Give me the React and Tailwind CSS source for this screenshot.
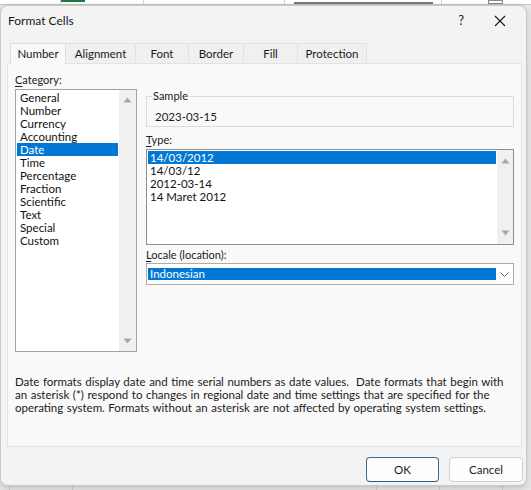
import React from 'react'

const font = { fontFamily: 'Lato, "Noto Sans", sans-serif' }

const categories = ['General', 'Number', 'Currency', 'Accounting', 'Date', 'Time', 'Percentage', 'Fraction', 'Scientific', 'Text', 'Special', 'Custom']
const types = ['14/03/2012', '14/03/12', '2012-03-14', '14 Maret 2012']
const tabs = [
  { label: 'Alignment', w: 'w-[70px]' },
  { label: 'Font', w: 'w-[53px]' },
  { label: 'Border', w: 'w-[55px]' },
  { label: 'Fill', w: 'w-[54px]' },
  { label: 'Protection', w: 'w-[69px]' },
]

function ArrowUp() {
  return (
    <svg width="9" height="6" viewBox="0 0 9 6"><path d="M0.5 5.5 L4.5 0.5 L8.5 5.5 Z" fill="#a6a6a6" /></svg>
  )
}

function ArrowDown() {
  return (
    <svg width="9" height="6" viewBox="0 0 9 6"><path d="M0.5 0.5 L4.5 5.5 L8.5 0.5 Z" fill="#a6a6a6" /></svg>
  )
}

function Scrollbar() {
  return (
    <div className="w-[17px] self-stretch bg-[#f0f0f0] flex flex-col items-center justify-between py-[7px]">
      <ArrowUp />
      <ArrowDown />
    </div>
  )
}

export default function App() {
  return (
    <div className="relative w-[531px] h-[490px] overflow-hidden bg-[#e9e9e9] text-[#1b1b1b]" style={font}>
      {/* spreadsheet behind the dialog */}
      <div className="h-[5px] bg-white border-b border-[#c6c6c6] flex">
        <div className="w-[61px] border-r border-[#d4d4d4]" />
        <div className="w-[24px] bg-[#217346] h-[2px]" />
        <div className="w-[59px] border-r border-[#d4d4d4]" />
        <div className="w-[141px] border-r border-[#d4d4d4]" />
        <div className="w-[9px]" />
        <div className="w-[139px] border-b-2 border-[#777]" />
        <div className="w-[9px] border-r border-[#d4d4d4]" />
        <div className="w-[46px]" />
        <div className="w-[15px] border border-[#888]" />
      </div>
      <div className="absolute left-0 bottom-0 w-full h-[5px] bg-[#e6e6e6] flex">
        <div className="w-[10px] border-r border-[#cfcfcf]" />
        <div className="w-[63px] border-r border-[#cfcfcf]" />
        <div className="w-[304px] border-r border-[#cfcfcf]" />
        <div className="w-[63px] border-r border-[#cfcfcf]" />
        <div className="w-[63px] border-r border-[#cfcfcf]" />
      </div>

      {/* dialog window */}
      <div className="absolute left-0 top-[5px] w-[527px] h-[481px] bg-[#f3f3f3] rounded-[8px] border border-[#c9c9c9] shadow-[0_2px_6px_rgba(0,0,0,0.18)] flex flex-col">
        {/* title bar */}
        <div className="h-[37px] flex items-center pl-[7px] pr-[20px]">
          <span className="text-[12px] leading-[14px] text-[#1a1a1a] -mt-[7px]">Format Cells</span>
          <span className="ml-auto text-[13px] text-[#222] -mt-[7px]">?</span>
          <svg className="ml-[30px] -mt-[7px]" width="12" height="12" viewBox="0 0 12 12">
            <path d="M1 1 L11 11 M11 1 L1 11" stroke="#1a1a1a" strokeWidth="1.1" />
          </svg>
        </div>

        {/* tabs */}
        <div className="flex pl-[9px] h-[20px] relative z-10">
          <div className="w-[56px] h-[21px] bg-[#f9f9f9] border-l border-t border-r border-[#dedede] flex items-center justify-center text-[11.5px] text-[#1b1b1b]">
            Number
          </div>
          {tabs.map((t) => (
            <div key={t.label} className={`${t.w} h-[20px] bg-[#f0f0f0] border-t border-r border-[#e2e2e2] flex items-center justify-center text-[11.5px] text-[#1b1b1b]`}>
              {t.label}
            </div>
          ))}
        </div>

        {/* panel */}
        <div className="ml-[6px] w-[515px] h-[384px] bg-[#f9f9f9] border border-[#e3e3e3] pt-[9px] px-[7px] text-[11px]">
          <div className="flex gap-[9px]">
            {/* category */}
            <div className="w-[122px]">
              <div className="leading-[13px] h-[13px] mb-[3px]"><span className="underline underline-offset-2">C</span>ategory:</div>
              <div className="h-[263px] bg-white border border-[#a3a3a3] flex">
                <div className="flex-1 pt-[1px] pl-[1px] pr-[1px]">
                  {categories.map((c) => (
                    <div key={c} className={`h-[13px] leading-[13px] pl-[3px] text-[11.5px] ${c === 'Date' ? 'bg-[#0078d4] text-white' : 'text-[#111]'}`}>{c}</div>
                  ))}
                </div>
                <Scrollbar />
              </div>
            </div>

            {/* right side */}
            <div className="w-[368px]">
              <div className="relative mt-[23px] h-[31px] border border-[#dcdcdc] flex items-center pl-[8px] pt-[9px]">
                <span className="absolute -top-[8px] left-[5px] px-[1px] bg-[#f9f9f9] leading-[13px]">Sample</span>
                <span className="leading-[13px] text-[11.5px]">2023-03-15</span>
              </div>
              <div className="mt-[6px] h-[13px] leading-[13px]"><span className="underline underline-offset-2">T</span>ype:</div>
              <div className="mt-[3px] h-[96px] bg-white border border-[#8e8e8e] flex">
                <div className="flex-1 pt-[1px] pl-[1px] pr-[1px]">
                  {types.map((t, i) => (
                    <div key={t} className={`h-[13px] leading-[13px] pl-[2px] text-[11.5px] ${i === 0 ? 'bg-[#0078d4] text-white' : 'text-[#111]'}`}>{t}</div>
                  ))}
                </div>
                <div className="w-[16px] bg-[#f0f0f0] flex flex-col items-center justify-between py-[8px]">
                  <ArrowUp />
                  <ArrowDown />
                </div>
              </div>
              <div className="mt-[3px] h-[13px] leading-[13px]"><span className="underline underline-offset-2">L</span>ocale (location):</div>
              <div className="mt-[2px] h-[22px] bg-white border border-[#adadad] flex items-center pl-[1px]">
                <div className="flex-1 h-[12px] leading-[12px] bg-[#0078d4] text-white pl-[2px] text-[11.5px]">Indonesian</div>
                <div className="w-[17px] h-full flex items-center justify-center">
                  <svg width="9" height="5" viewBox="0 0 9 5"><path d="M0.5 0.5 L4.5 4.5 L8.5 0.5" fill="none" stroke="#5a5a5a" strokeWidth="1" /></svg>
                </div>
              </div>
            </div>
          </div>

          <div className="mt-[23px] leading-[13px] text-[11.5px] [word-spacing:0.6px] text-[#1b1b1b] whitespace-nowrap">
            Date formats display date and time serial numbers as date values.&nbsp; Date formats that begin with<br />
            an asterisk (*) respond to changes in regional date and time settings that are specified for the<br />
            operating system. Formats without an asterisk are not affected by operating system settings.
          </div>
        </div>

        {/* buttons */}
        <div className="flex justify-end gap-[10px] pr-[3px] mt-[10px]">
          <button className="w-[73px] h-[25px] rounded-[4px] bg-[#fdfdfd] border border-[#3d6a96] border-b-[#2d5a86] text-[11.5px] text-[#1b1b1b]">OK</button>
          <button className="w-[74px] h-[25px] rounded-[4px] bg-[#fdfdfd] border border-[#d0d0d0] text-[11.5px] text-[#1b1b1b]">Cancel</button>
        </div>
      </div>
    </div>
  )
}
